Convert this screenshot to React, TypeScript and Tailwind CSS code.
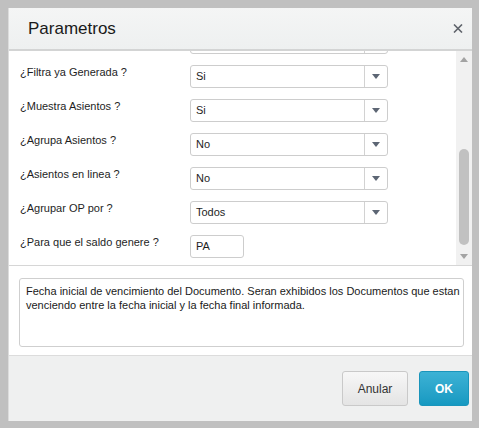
import React from "react";

type Param = {
  label: string;
  value: string;
  kind: "select" | "text";
};

// first entry sits mostly above the visible scroll window
const params: Param[] = [
  { label: "", value: "", kind: "select" },
  { label: "¿Filtra ya Generada ?", value: "Si", kind: "select" },
  { label: "¿Muestra Asientos ?", value: "Si", kind: "select" },
  { label: "¿Agrupa Asientos ?", value: "No", kind: "select" },
  { label: "¿Asientos en linea ?", value: "No", kind: "select" },
  { label: "¿Agrupar OP por ?", value: "Todos", kind: "select" },
  { label: "¿Para que el saldo genere ?", value: "PA", kind: "text" },
];

const Caret = ({ up = false, className = "" }: { up?: boolean; className?: string }) => (
  <svg width="8" height="5" viewBox="0 0 8 5" className={className}>
    <polygon points={up ? "0,5 8,5 4,0" : "0,0 8,0 4,5"} fill="currentColor" />
  </svg>
);

const SelectBox = ({ value }: { value: string }) => (
  <div className="flex h-[23px] w-[198px] items-stretch rounded-[3px] border border-[#cdcdcd] bg-white">
    <div className="flex flex-1 items-center pl-[5px] text-[11px] text-[#1e1e1e]">{value}</div>
    <div className="flex w-[23px] items-center justify-center border-l border-[#d2d2d2] text-[#5d6674]">
      <Caret />
    </div>
  </div>
);

const TextBox = ({ value }: { value: string }) => (
  <div className="flex h-[23px] w-[54px] items-center rounded-[3px] border border-[#cdcdcd] bg-white pl-[5px] text-[11px] text-[#1e1e1e]">
    {value}
  </div>
);

export default function App() {
  return (
    <div
      className="h-[428px] w-[479px] bg-[#c0c0c0] pt-[8px] pl-[8px]"
      style={{ fontFamily: '"Liberation Sans", Arial, sans-serif' }}
    >
      <div className="flex h-[413px] w-[464px] flex-col border-l border-[#dcdcdc] bg-white">
        {/* header */}
        <div className="flex h-[43px] items-center justify-between border-b-2 border-[#d3d4d4] bg-gradient-to-b from-[#f4f5f5] to-[#eef0f0] pl-[19px] pr-[9px]">
          <span className="text-[17px] text-[#1a1a1a]">Parametros</span>
          <svg width="10" height="9" viewBox="0 0 10 9" className="mt-[-1px]">
            <path d="M1 0.5 L9 8.5 M9 0.5 L1 8.5" stroke="#5f646b" strokeWidth="1.6" />
          </svg>
        </div>

        {/* parameter list */}
        <div className="flex h-[215px] border-b border-[#d6d6d6]">
          <div className="flex-1 overflow-hidden">
            <div className="-mt-[20px] flex flex-col gap-[11px] pl-[11px]">
              {params.map((p, i) => (
                <div key={i} className="flex items-start">
                  <div className="w-[170px] pt-[1px] text-[11px] leading-[13px] text-[#1e1e1e]">{p.label}</div>
                  {p.kind === "select" ? <SelectBox value={p.value} /> : <TextBox value={p.value} />}
                </div>
              ))}
            </div>
          </div>
          {/* scrollbar */}
          <div className="flex w-[16px] flex-col items-center bg-[#f1f1f1] pt-[6px] pb-[6px]">
            <Caret up className="text-[#a3a3a3]" />
            <div className="mt-[87px] h-[96px] w-[10px] rounded-full bg-[#c1c1c1]" />
            <div className="flex-1" />
            <Caret className="text-[#a3a3a3]" />
          </div>
        </div>

        {/* help text */}
        <div className="flex-1 px-[10px] pt-[12px]">
          <div className="h-[69px] w-[445px] rounded-[3px] border border-[#cfcfcf] pl-[6px] pt-[5px] text-[11px] leading-[14px] text-[#1a1a1a]">
            Fecha inicial de vencimiento del Documento. Seran exhibidos los Documentos que estan venciendo entre la fecha
            inicial y la fecha final informada.
          </div>
        </div>

        {/* footer */}
        <div className="flex h-[66px] items-start justify-end gap-[11px] border-t border-[#dcdcdc] bg-[#eff0f0] pt-[15px] pr-[3px]">
          <button className="h-[35px] w-[66px] rounded-[3px] border border-[#c9c9c9] bg-gradient-to-b from-[#f7f7f7] to-[#e4e4e4] text-[12px] text-[#333]">
            Anular
          </button>
          <button className="h-[35px] w-[50px] rounded-[3px] border border-[#1a95bb] bg-gradient-to-b from-[#3cb2d5] to-[#1599c1] text-[12px] font-bold text-white">
            OK
          </button>
        </div>
      </div>
    </div>
  );
}
